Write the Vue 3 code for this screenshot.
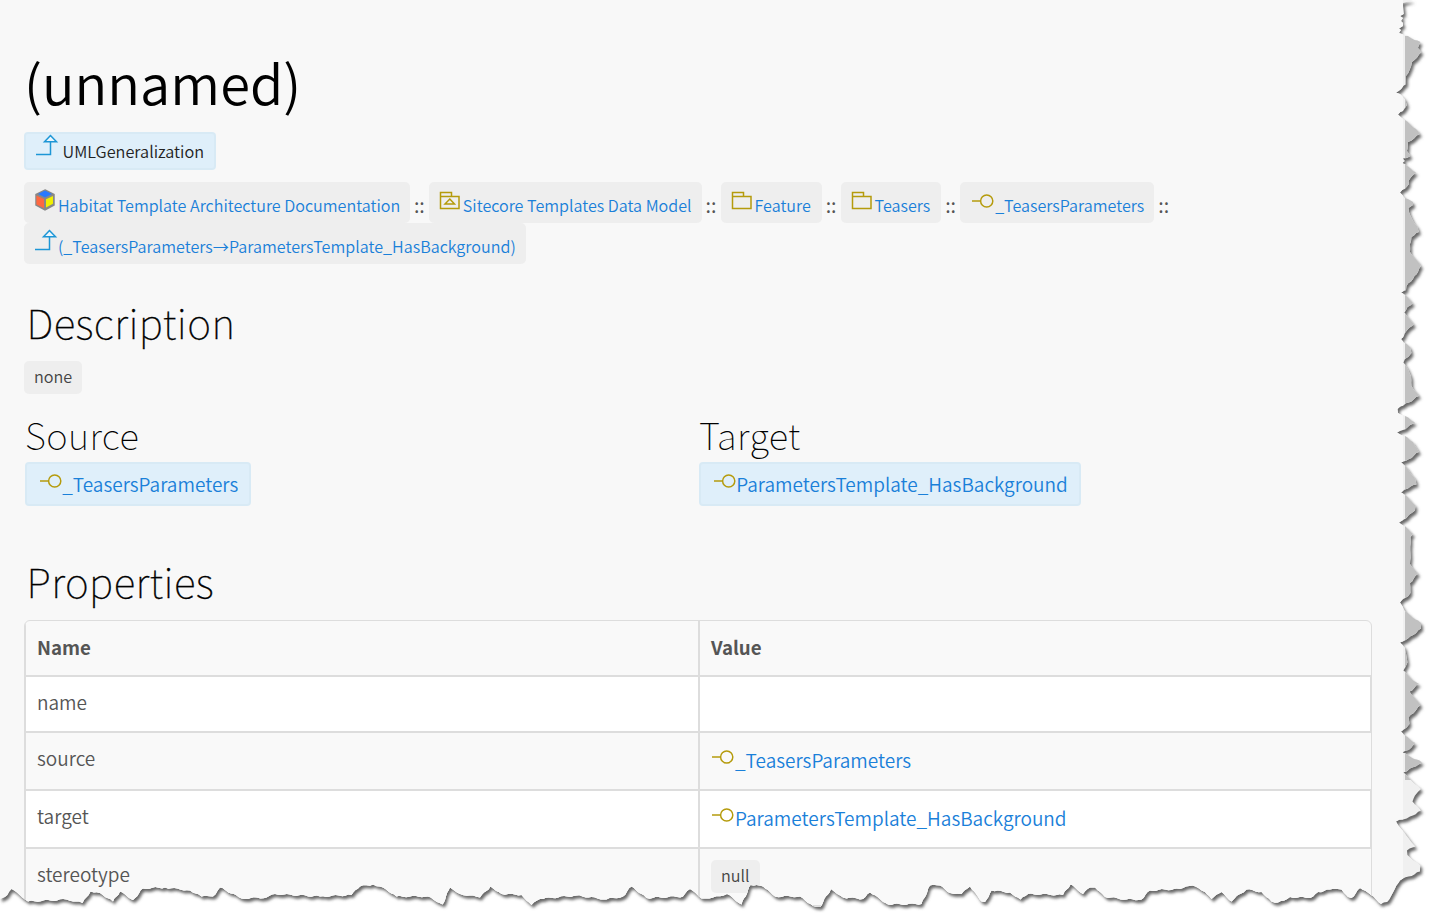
<script setup>
import { h } from 'vue'

const icons = {
  generalization: [24, 22, [
    ['path', { d: 'M1 20.5H15.5V8', stroke: '#1d96d6' }],
    ['path', { d: 'M15.5 1.5L9.5 7.8H21.5Z', stroke: '#1d96d6', fill: '#eaf6fd' }],
  ]],
  cube: [22, 24, [
    ['path', { d: 'M11 2L20 6.5V17L11 21.8L2 17V6.5Z', fill: '#888', stroke: '#888' }],
    ['path', { d: 'M11 2.6L18 6L11 9.4L4 6Z', fill: '#2979ff' }],
    ['path', { d: 'M2.4 7.4L10 11V20.2L2.4 16.4Z', fill: '#ff6840' }],
    ['path', { d: 'M12 11.2L19 8V15.8L12 19.6Z', fill: '#f0f000' }],
  ]],
  model: [22, 20, [
    ['path', { d: 'M1.5 5.5H20V17.5H1.5ZM1.5 5.5V1.5H12.5V5.5', stroke: '#b59b0c' }],
    ['path', { d: 'M10.8 8L15.5 13H6Z', stroke: '#b59b0c' }],
  ]],
  package: [22, 20, [
    ['path', { d: 'M1.5 5.5H20V17.5H1.5ZM1.5 5.5V1.5H12.5V5.5', stroke: '#b59b0c' }],
  ]],
  interface: [24, 16, [
    ['path', { d: 'M1 8H9', stroke: '#b59b0c' }],
    ['circle', { cx: 15.7, cy: 8, r: 6.1, stroke: '#b59b0c' }],
  ]],
}

const Icon = (props) => {
  const [w, hgt, shapes] = icons[props.name]
  return h('svg', { class: 'icon', width: w, height: hgt, viewBox: `0 0 ${w} ${hgt}`, fill: 'none', 'stroke-width': 1.5 },
    shapes.map(([tag, attrs]) => h(tag, attrs)))
}
Icon.props = ['name']

const crumbs = [
  { icon: 'cube', label: 'Habitat Template Architecture Documentation' },
  { icon: 'model', label: 'Sitecore Templates Data Model' },
  { icon: 'package', label: 'Feature' },
  { icon: 'package', label: 'Teasers' },
  { icon: 'interface', label: '_TeasersParameters' },
]

const rightEdge = '1403,4 1404,15 1400,17 1403,19 1401,22 1403,24 1403,27 1399,29.5 1401,31 1399,34 1405,36 1420.5,43 1418,49 1421.5,53 1412,63 1410,70 1406,77 1406,85 1396,93.5 1400,95 1405,100 1407,106 1403,112 1398,115.5 1405,121 1416,130 1420,135 1408,143 1407,152 1410.5,157 1403,159.5 1405,162 1402.5,164 1410,169 1416,173.5 1408.5,182 1409,185 1400,193.5 1405,199 1413,203 1413,206 1408.5,209 1409,213 1413,222 1417,227 1419,233 1411.5,238 1410,245 1410,253 1421,267 1413,280 1406.5,287 1406,291 1401,293.5 1406.5,297 1413,304 1407.5,308 1404.5,313.5 1407,317 1414,325 1405,334 1403.5,338 1401,340 1404,343.5 1410,348 1411.5,354 1405,360 1403.5,363.5 1408,370 1411,377 1411.5,387 1419,397 1403.5,406.5 1397.5,410 1398,414 1405,417 1415,423.5 1405,430.5 1397,433.5 1405,437 1413,443 1419,453 1406.5,461.5 1401,463.5 1406.5,468 1415.5,480.5 1416.5,485.5 1405,490.5 1401,493.5 1406.5,497 1415.5,506.5 1415,511.5 1406.5,519 1399,523.5 1408,530 1413,535 1410.5,538 1410.5,555 1410,565 1418,575 1410,584 1410.5,594 1400,603.5 1403.5,609 1405,612 1410,616 1421,624 1421,629.5 1408,639.5 1400,643.5 1405,648.5 1407.5,663.5 1403.5,671.5 1410,678.5 1419,685 1409.5,692.5 1413.5,697.5 1420.5,706 1408.5,718.5 1409.5,725 1401,732.5 1405,736.5 1415.5,744 1411.5,748.5 1402.5,753.5 1408.5,756.5 1422,763.5 1410,769.5 1403.5,773.5 1410,780 1421,790 1415,796.5 1412.5,802.5 1421,811.5 1410,817.5 1396,822.5 1400,828.5 1406.5,836.5 1415.5,847.5 1407,851.5 1407.5,856 1420.5,866.5 1420,872.5 1400,881.5 1393,893.5 1387,903 1381,905 1371,896'
const bottomEdge = '1360,889 1351.5,899 1348,898 1341.5,890.5 1330,890.5 1318,893 1310,899 1290,898 1278,903.5 1271.5,902.5 1261.5,893 1246.5,890.5 1240,895 1231.5,902.5 1221.5,893 1211.5,900 1205,893 1192.5,886.5 1180,890 1150,891.5 1141.5,900.5 1126.5,900.5 1105,898 1095,888.5 1090,888.5 1083,895 1070.5,885.5 1063,896 1028,895 1020.5,900.5 1010,893.5 991.5,891.5 985,903 981.5,902.5 970,887.5 961.5,895 950,894 940,886.5 930,886.5 921.5,905 888,905.5 870,893.5 863,900 843,898.5 831,890 820,908 813,907 800,897.5 775,897.5 763,887.5 750.5,886 741.5,905.5 727,895 713,898.5 701.5,899.5 690,890 683,897.5 646.5,899 631.5,887.5 623,897.5 606.5,900.5 576.5,896.5 540,900 531.5,906 521.5,896 501.5,895 490.5,887.5 480,898.5 460,895 450,888.5 442.5,905.5 428,897.5 396.5,897.5 383,888.5 373,885.5 360,887.5 351.5,896 320,897.5 275,895 266.5,898.5 241.5,899.5 220,888.5 213,897.5 201.5,897.5 190,891.5 165,888.5 143,889.5 133,901 120,892.5 113,902.5 100,894 90.5,892.5 82.5,904 66.5,900.5 28,902.5 11.5,890 5,898 0,899'

const parse = (s) => s.split(' ').map((p) => p.split(',').map(Number))

// Splits long runs into short steps with small bumps so the tear looks ragged.
const roughen = (points) => points.flatMap(([x, y], i) => {
  const next = points[i + 1]
  if (!next) return [[x, y]]
  const n = Math.max(1, Math.floor(Math.hypot(next[0] - x, next[1] - y) / 3))
  return Array.from({ length: n }, (_, k) => {
    const bump = k ? Math.sin((x + k * 3) * 12.9898) * 0.8 : 0
    return [(x + ((next[0] - x) * k) / n + bump * 0.3).toFixed(1), (y + ((next[1] - y) * k) / n + bump - 1).toFixed(1)]
  })
})

const tear = `M0 0H1413L${roughen([...parse(rightEdge), ...parse(bottomEdge)]).map((p) => p.join(' ')).join('L')}Z`
</script>

<template>
  <div class="canvas">
    <svg class="shadow" width="1438" height="924" viewBox="0 0 1438 924">
      <defs>
        <clipPath id="tear"><path :d="tear" /></clipPath>
        <filter id="soft" x="-2%" y="-2%" width="104%" height="104%"><feGaussianBlur stdDeviation="1.4" /></filter>
      </defs>
      <path :d="tear" fill="#686868" transform="translate(2 3)" filter="url(#soft)" />
    </svg>
    <div class="sheet">
      <main class="page">
        <h1>(unnamed)</h1>
        <div class="kind"><Icon name="generalization" /><span>UMLGeneralization</span></div>
        <nav class="crumbs">
          <template v-for="c in crumbs" :key="c.label">
            <a class="crumb" :class="c.icon"><Icon :name="c.icon" /><span>{{ c.label }}</span></a>
            <span class="sep">::</span>
          </template>
          <a class="crumb generalization"><Icon name="generalization" /><span>(_TeasersParameters→ParametersTemplate_HasBackground)</span></a>
        </nav>
        <h2 class="description">Description</h2>
        <div class="tag">none</div>
        <div class="ends">
          <section>
            <h3 class="source">Source</h3>
            <a class="end"><Icon name="interface" /><span>_TeasersParameters</span></a>
          </section>
          <section>
            <h3 class="target">Target</h3>
            <a class="end"><Icon name="interface" /><span>ParametersTemplate_HasBackground</span></a>
          </section>
        </div>
        <h2 class="properties">Properties</h2>
        <div class="table">
          <div class="row head"><div>Name</div><div>Value</div></div>
          <div class="row short white"><div>name</div><div></div></div>
          <div class="row"><div>source</div><div><a class="ref"><Icon name="interface" /><span>_TeasersParameters</span></a></div></div>
          <div class="row white"><div>target</div><div><a class="ref"><Icon name="interface" /><span>ParametersTemplate_HasBackground</span></a></div></div>
          <div class="row"><div>stereotype</div><div><span class="tag">null</span></div></div>
        </div>
      </main>
      <div class="scrollbar"><div class="thumb"></div></div>
    </div>
  </div>
</template>

<style>
body { margin: 0; background: #fff; overflow: hidden; }
</style>

<style scoped>
.canvas { position: relative; width: 1438px; height: 924px; overflow: hidden; background: #fff; font-family: "Noto Sans CJK SC", "Noto Sans", sans-serif; font-weight: 350; color: #555; }
.shadow { position: absolute; left: 0; top: 0; }
.sheet { position: relative; display: flex; width: 1438px; height: 924px; background: #f0f0f0; clip-path: url(#tear); }
.page { box-sizing: border-box; width: 1403px; padding: 42px 31px 0 24px; background: #f8f8f8; }
.scrollbar { flex: 1; padding: 36px 0 0 2px; }
.thumb { height: 744px; background: #c1c1c1; }
h1, h2, h3 { margin: 0; color: #000; white-space: nowrap; }
h1 { height: 80px; line-height: 80px; font-size: 54.2px; font-weight: 350; }
h2 { height: 60px; line-height: 56px; font-size: 40.5px; font-weight: 100; -webkit-text-stroke: 0.3px #000; letter-spacing: 0.45px; padding-left: 2.5px; }
h3 { height: 50px; line-height: 46px; font-size: 36.5px; font-weight: 100; letter-spacing: 0.4px; }
a, span, .kind { white-space: nowrap; }
a { color: #1a80d9; }
.kind, .end { box-sizing: border-box; display: flex; width: max-content; border: 2px solid #d8eaf5; border-radius: 4px; background: #dfeffa; }
.kind { margin-top: 10px; height: 38px; padding: 0 10px 0 9.3px; line-height: 34px; font-size: 16.25px; color: #222; }
.kind .icon { margin: 0 3.3px 0 0; }
.crumbs { display: flex; flex-wrap: wrap; margin-top: 12px; font-size: 16.1px; line-height: 46px; }
.crumb { box-sizing: border-box; display: flex; height: 41px; padding: 0 10px; border-radius: 5px; background: #eee; }
.crumb .icon { margin: 6px 2px 0 0; }
.crumb.cube { padding-right: 9.7px; }
.crumb.generalization { padding-right: 10.4px; letter-spacing: 0.02px; }
.crumb.generalization .icon { margin-right: 0; }
.crumb.model .icon, .crumb.package .icon { margin-top: 9px; }
.crumb.package { padding-right: 10.8px; }
.crumb.interface .icon { margin: 11px 0 0 1px; }
.sep { width: 19px; height: 41px; text-align: center; font-size: 19.5px; font-weight: 400; }
.description { margin-top: 30px; }
.tag { box-sizing: border-box; display: block; width: max-content; height: 33px; padding: 0 10px; border-radius: 5px; background: #eee; line-height: 31px; font-size: 16.2px; color: #444; }
.description + .tag { margin-top: 7px; }
.ends { display: grid; grid-template-columns: 674px 1fr; margin: 18px 0 0 1px; }
.end { height: 44px; padding: 0 11px; line-height: 40px; font-size: 19px; }
.end .icon { margin: 9px -0.8px 0 1px; }
.properties { margin-top: 47px; }
.table { margin-top: 7px; box-sizing: border-box; width: 1348px; border: 1px solid #ddd; border-radius: 6px; overflow: hidden; background: #f9f9f9; }
.row { box-sizing: border-box; display: grid; grid-template-columns: 674px 1fr; height: 58px; border-left: 1px solid #ddd; border-bottom: 2px solid #ddd; font-size: 19px; line-height: 50px; }
.row > div { padding-left: 11px; }
.row > div:first-child { border-right: 2px solid #ddd; }
.row.short, .row.head { height: 56px; }
.row.head { font-weight: 700; font-size: 18.7px; line-height: 52px; }
.white { background: #fff; border-right: 1px solid #ddd; }
.ref { display: flex; line-height: 53px; }
.ref .icon { margin-top: 16px; }
.row .tag { margin-top: 11px; }
</style>
